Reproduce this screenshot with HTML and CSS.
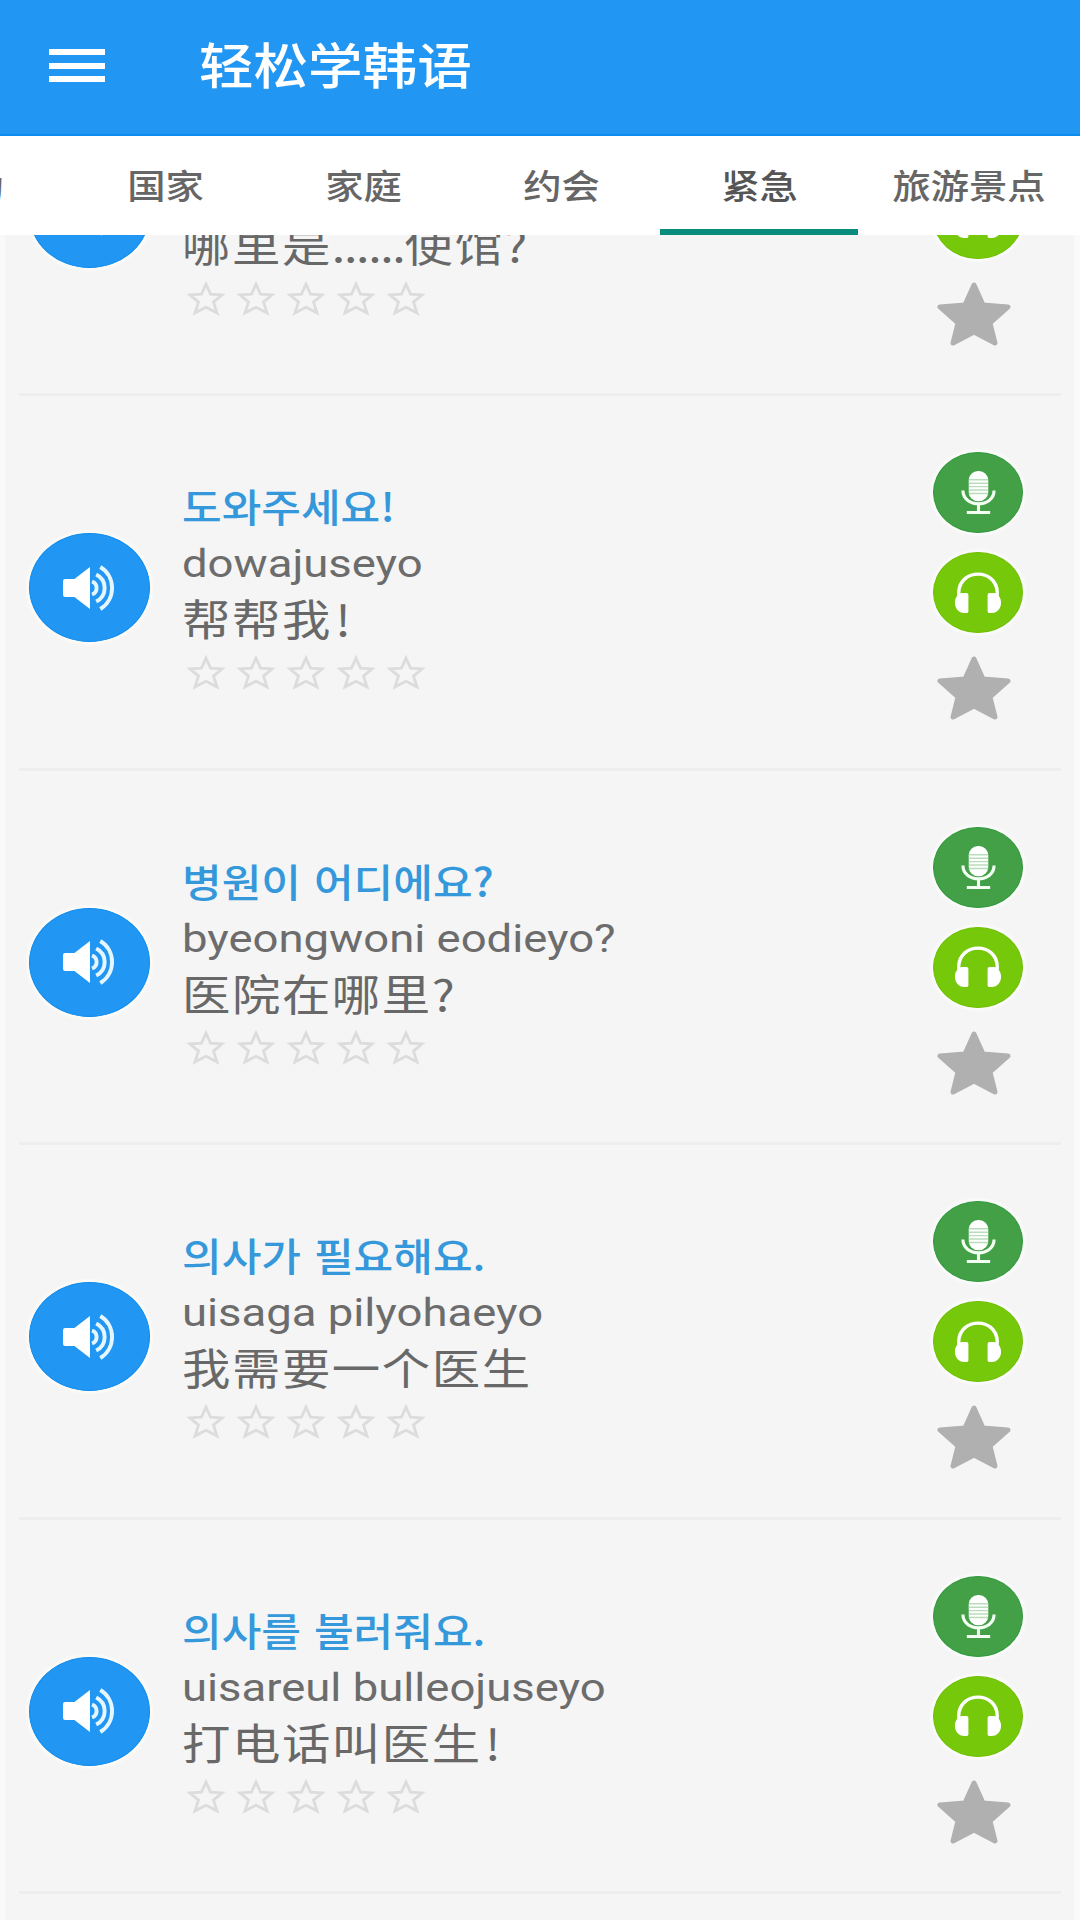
FILE: index.html
```html
<!DOCTYPE html>
<html lang="zh-CN">
<head>
<meta charset="utf-8">
<title>轻松学韩语</title>
<link rel="stylesheet" href="styles.css">
</head>
<body>
<svg class="defs" width="0" height="0">
  <symbol id="speaker" viewBox="0 0 56 50" preserveAspectRatio="none">
    <path d="M1 18Q1 16 3 16H12L27 4V46L12 34H3Q1 34 1 32Z" fill="#fff"/>
    <path d="M29 18.500A7 7 0 0 1 29 31.500M33 11.500A14.500 15 0 0 1 33 38.500M37 4A22 24 0 0 1 37 46" fill="none" stroke="#e6f6ff" stroke-width="3.800"/>
  </symbol>
  <symbol id="mic" viewBox="0 0 36 46" preserveAspectRatio="none">
    <rect x="8" y="1" width="20" height="31" rx="9.500" fill="#fff"/>
    <path d="M8 10H28M8 13.500H28M8 17H28M8 20.500H28M8 24H28" stroke="#b9ddbb" stroke-width="1.500"/>
    <path d="M2 21C2 39 34 39 34 21M18 34V43M6 43.500H30" fill="none" stroke="#f2fff2" stroke-width="3.200"/>
  </symbol>
  <symbol id="phones" viewBox="0 0 50 44" preserveAspectRatio="none">
    <path d="M5 25V21C6 -4 44 -4 45 21V25" fill="none" stroke="#fff" stroke-width="3.500"/>
    <path d="M15 24V41Q15 43 12 43H11C-2 43-2 23 9 22H13Q15 22 15 24ZM35 24V41Q35 43 38 43H39C52 43 52 23 41 22H37Q35 22 35 24Z" fill="#fff"/>
  </symbol>
  <symbol id="star" viewBox="0 0 74 64" preserveAspectRatio="none">
    <path d="M37 3L46 23L71 25L53 41L58 61L37 50L16 61L21 41L3 25L28 23Z" fill="#b0b0b0" stroke="#b0b0b0" stroke-width="5" stroke-linejoin="round"/>
  </symbol>
  <symbol id="rate" viewBox="0 0 40 34" preserveAspectRatio="none">
    <path d="M20 3L24.500 12.800L36 13.500L27.500 20.500L31 31L20 25.500L9 31L12.500 20.500L4 13.500L15.500 12.800Z" fill="none" stroke="#dcdcdc" stroke-width="2.800"/>
  </symbol>
</svg>
<div class="app">
  <header class="bar">
    <div class="menu"><i></i><i></i><i></i></div>
    <h1 class="title">轻松学韩语</h1>
  </header>
  <nav class="tabs">
    <div class="tab prev"><span>动</span></div>
    <div class="tab"><span>国家</span></div>
    <div class="tab"><span>家庭</span></div>
    <div class="tab"><span>约会</span></div>
    <div class="tab active"><span>紧急</span></div>
    <div class="tab wide"><span>旅游景点</span></div>
  </nav>
  <main class="list" id="list"></main>
</div>
<script src="app.js"></script>
</body>
</html>
```
FILE: app.js
```js
const phrases = [
  ["", "", "哪里是<b class=\"dots\">......</b>使馆?"],
  ["도와주세요!", "dowajuseyo", "帮帮我<b class=\"bang\">!</b>"],
  ["병원이 어디에요?", "byeongwoni eodieyo?", "医院在哪里?"],
  ["의사가 필요해요.", "uisaga pilyohaeyo", "我需要一个医生"],
  ["의사를 불러줘요.", "uisareul bulleojuseyo", "打电话叫医生<b class=\"bang\">!</b>"]
];
const icon = (name) => `<svg class="i-${name}"><use href="#${name}"/></svg>`;
document.getElementById("list").innerHTML = phrases.map(([ko, latin, zh]) => `
  <article class="row">
    <div class="play">${icon("speaker")}</div>
    <div class="text">
      <p class="ko"><span>${ko}</span></p>
      <p class="latin"><span>${latin}</span></p>
      <p class="zh"><span>${zh}</span></p>
      <div class="rating">${icon("rate").repeat(5)}</div>
    </div>
    <div class="actions">
      <div class="round rec">${icon("mic")}</div>
      <div class="round listen">${icon("phones")}</div>
      ${icon("star")}
    </div>
  </article>`).join("");
```
FILE: styles.css
```css
* { box-sizing: border-box; margin: 0; padding: 0; }
body { width: 1080px; height: 1920px; overflow: hidden; background: #f5f5f5; font-family: Roboto, "Noto Sans CJK SC", sans-serif; }
.defs { display: block; }
svg { display: block; }
.app { display: flex; flex-direction: column; height: 1920px; }
.bar { flex: none; height: 136px; padding: 0 0 3px 49px; display: flex; align-items: center; background: #2196f3; border-bottom: 2px solid #0d8cef; }
.menu { width: 56px; display: flex; flex-direction: column; gap: 7.500px; }
.menu i { height: 6px; background: #fff; }
.title { margin: -5px 0 0 94px; color: #fff; font: 500 49px/72px "Noto Sans CJK SC", sans-serif; transform: scaleX(1.113); transform-origin: left; }
.tabs { flex: none; height: 99px; display: flex; background: #fff; overflow: hidden; }
.tab { flex: none; width: 198px; height: 99px; display: flex; align-items: center; justify-content: center; color: #666; font: 500 34.500px/50px "Noto Sans CJK SC", sans-serif; border-bottom: 6px solid transparent; padding-top: 2px; }
.tab span { transform: scaleX(1.11); white-space: nowrap; }
.tab.prev { width: 66px; justify-content: flex-end; padding-right: 65px; }
.tab.active { width: 198px; color: #555; border-color: #088d7c; }
.tab.wide { width: 221px; }
.list { flex: 1; min-height: 0; overflow: hidden; display: flex; flex-direction: column; justify-content: flex-start; border: solid #fafafa; border-width: 0 6px 0 5px; }
.row { flex: none; height: 374.500px; margin: 0 13px 0 14px; padding: 50px 0 0 10px; display: flex; border-bottom: 3px solid #eee; }
.row:first-child { margin-top: -213.500px; }
.play { flex: none; width: 121px; height: 109px; margin-top: 87px; border-radius: 50%; background: #2196f3; border: 1px solid #0d8cef; box-shadow: 0 0 2px 3px #fbfaf6; display: flex; align-items: center; justify-content: center; }
.i-speaker { width: 58px; height: 50px; margin-left: 2px; }
.text { flex: 1; margin-left: 32px; padding-top: 31px; }
.text p { white-space: nowrap; height: 56px; }
.text span { display: inline-block; transform-origin: left; }
.text b { font-weight: inherit; }
.ko { color: #3498db; font: 500 39px/56px "Noto Sans CJK KR", sans-serif; word-spacing: 3px; }
.ko span { transform: scaleX(1.105); }
.latin { color: #6c6c6c; font: 400 39px/56px Roboto, sans-serif; padding-top: 3px; }
.latin span { transform: scaleX(1.165); }
.zh { color: #686868; font: 400 43px/56px "Noto Sans CJK SC", sans-serif; letter-spacing: 1.400px; }
.zh span { transform: scaleX(1.125); }
.zh .dots { letter-spacing: -1.200px; }
.zh .bang { margin-left: 3px; }
.rating { display: flex; gap: 10px; margin: 10px 0 0 4px; }
.i-rate { width: 40px; height: 35px; }
.actions { flex: none; width: 110px; margin-right: 28px; display: flex; flex-direction: column; align-items: center; }
.round { width: 90px; height: 81px; border-radius: 50%; display: flex; align-items: center; justify-content: center; box-shadow: 0 0 2px 3px #fafafa; }
.rec { background: #43a047; border: 1px solid #2f9a3a; margin-top: 6px; }
.listen { background: #76c80b; border: 1px solid #6ec000; margin-top: 19px; }
.i-mic { width: 35px; height: 45px; }
.i-phones { width: 48px; height: 42px; }
.i-star { width: 74px; height: 64px; margin: 23px 8px 0 0; }
```
